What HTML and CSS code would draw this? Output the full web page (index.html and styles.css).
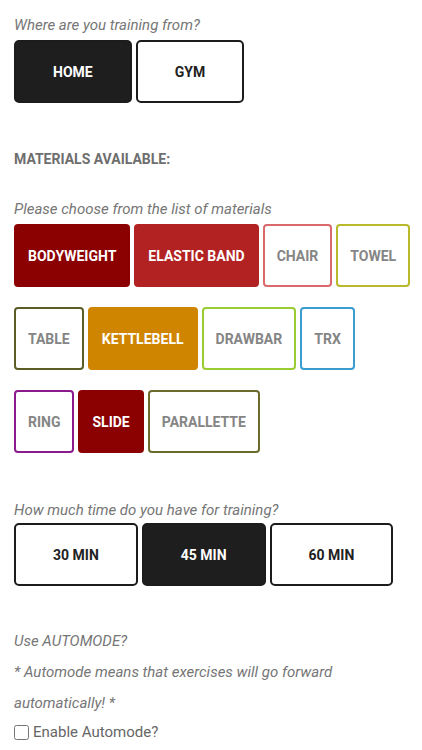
FILE: index.html
```html
<!DOCTYPE html>
<html lang="en">
<head>
<meta charset="utf-8">
<title>Training setup</title>
<link rel="stylesheet" href="styles.css">
</head>
<body>
<div class="page">
  <p class="q q-place">Where are you training from?</p>
  <div class="choices">
    <button class="opt opt-selected">HOME</button>
    <button class="opt">GYM</button>
  </div>

  <h3 class="section">MATERIALS AVAILABLE:</h3>
  <p class="q q-mat">Please choose from the list of materials</p>
  <div class="materials">
    <button class="mat fill-darkred">BODYWEIGHT</button>
    <button class="mat fill-firebrick">ELASTIC BAND</button>
    <button class="mat line-coral">CHAIR</button>
    <button class="mat line-khaki">TOWEL</button>
    <button class="mat line-olive">TABLE</button>
    <button class="mat fill-orange">KETTLEBELL</button>
    <button class="mat line-green">DRAWBAR</button>
    <button class="mat line-blue">TRX</button>
    <button class="mat line-purple">RING</button>
    <button class="mat fill-darkred">SLIDE</button>
    <button class="mat line-olive2">PARALLETTE</button>
  </div>

  <p class="q q-time">How much time do you have for training?</p>
  <div class="choices">
    <button class="opt">30 MIN</button>
    <button class="opt opt-selected">45 MIN</button>
    <button class="opt">60 MIN</button>
  </div>

  <p class="q auto">Use AUTOMODE?</p>
  <p class="q auto">* Automode means that exercises will go forward automatically! *</p>
  <label class="check"><input type="checkbox" class="box">Enable Automode?</label>
</div>
</body>
</html>
```

FILE: styles.css
```css
* { box-sizing: border-box; }

html, body {
  margin: 0;
  background: #ffffff;
}

body {
  font-family: Roboto, "Liberation Sans", sans-serif;
  color: #757575;
}

.page {
  padding: 15px 6px 0 14px;
  width: 422px;
}

.q {
  margin: 0 0 5px 0;
  font-size: 15px;
  line-height: 20px;
  font-style: italic;
  color: #767676;
}

.choices {
  display: flex;
  gap: 4px;
}

.opt {
  height: 63px;
  padding: 0 37px;
  border: 2px solid #1c1c1c;
  border-radius: 5px;
  background: #ffffff;
  color: #222222;
  font-family: Roboto, "Liberation Sans", sans-serif;
  font-weight: 700;
  font-size: 14px;
  line-height: 16px;
  cursor: pointer;
}

.opt-selected {
  background: #1e1e1e;
  color: #ffffff;
}

.section {
  margin: 46px 0 30px 0;
  font-size: 14px;
  line-height: 20px;
  font-weight: 700;
  color: #6e6e6e;
}

.q-mat { margin-bottom: 5px; }

.materials {
  display: flex;
  flex-wrap: wrap;
  column-gap: 4px;
  row-gap: 20px;
}

.mat {
  height: 63px;
  padding: 0 12px;
  border: 2px solid #808080;
  border-radius: 4px;
  background: #ffffff;
  color: #858585;
  font-family: Roboto, "Liberation Sans", sans-serif;
  font-weight: 700;
  font-size: 14px;
  line-height: 16px;
  cursor: pointer;
}

.fill-darkred { background: #8b0000; border-color: #8b0000; color: #ffffff; }
.fill-firebrick { background: #b22222; border-color: #b22222; color: #ffffff; }
.fill-orange { background: #cf8500; border-color: #cf8500; color: #ffffff; }
.line-coral { border-color: #d9696b; }
.line-khaki { border-color: #b9ba2b; }
.line-olive { border-color: #5c5c26; }
.line-green { border-color: #9acd32; }
.line-blue { border-color: #3a9ccf; }
.line-purple { border-color: #8b1a8b; }
.line-olive2 { border-color: #6b6b2c; }

.q-time {
  margin-top: 47px;
  margin-bottom: 3px;
}

.auto {
  margin: 0;
  line-height: 31px;
}

.choices + .auto { margin-top: 40px; }

.check {
  display: flex;
  align-items: center;
  margin-top: 3px;
  font-size: 15px;
  line-height: 20px;
  color: #666666;
}

.box {
  width: 15px;
  height: 15px;
  margin: 0 4px 0 0;
}
```
